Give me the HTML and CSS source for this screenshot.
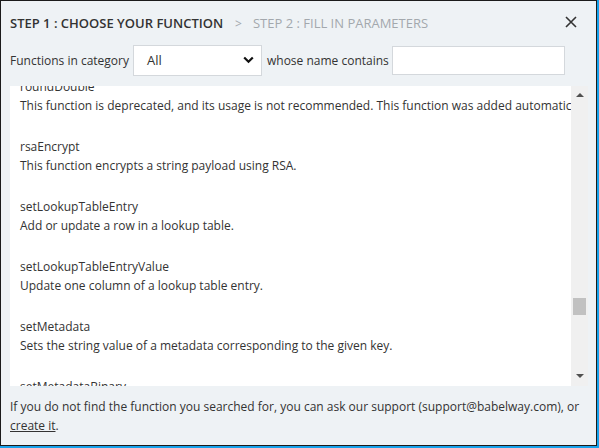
FILE: index.html
```html
<!DOCTYPE html>
<html>
<head>
<meta charset="utf-8">
<link rel="stylesheet" href="styles.css">
</head>
<body>
<div class="dialog">
  <div class="header">
    <span class="step active">STEP 1 : CHOOSE YOUR FUNCTION</span>
    <span class="sep">&gt;</span>
    <span class="step">STEP 2 : FILL IN PARAMETERS</span>
    <span class="close"><svg width="12" height="12" viewBox="0 0 12 12"><path d="M1 1 L11 11 M11 1 L1 11" stroke="#333" stroke-width="1.6" fill="none"/></svg></span>
  </div>
  <div class="filters">
    <span class="label">Functions in category</span>
    <div class="select"><span>All</span><svg width="11" height="8" viewBox="0 0 11 8"><path d="M1.2 1.5 L5.5 5.8 L9.8 1.5" stroke="#111" stroke-width="2.2" fill="none"/></svg></div>
    <span class="label">whose name contains</span>
    <div class="input"></div>
  </div>
  <div class="list">
    <div class="viewport">
      <div class="items">
        <div class="item"><div class="name">roundDouble</div><div class="desc">This function is deprecated, and its usage is not recommended. This function was added automatically for backward compatibility.</div></div>
        <div class="item"><div class="name">rsaEncrypt</div><div class="desc">This function encrypts a string payload using RSA.</div></div>
        <div class="item"><div class="name">setLookupTableEntry</div><div class="desc">Add or update a row in a lookup table.</div></div>
        <div class="item"><div class="name">setLookupTableEntryValue</div><div class="desc">Update one column of a lookup table entry.</div></div>
        <div class="item"><div class="name">setMetadata</div><div class="desc">Sets the string value of a metadata corresponding to the given key.</div></div>
        <div class="item"><div class="name">setMetadataBinary</div><div class="desc">Sets the binary value of a metadata corresponding to the given key.</div></div>
      </div>
    </div>
    <div class="scrollbar">
      <div class="arrow up"></div>
      <div class="track"><div class="thumb"></div></div>
      <div class="arrow down"></div>
    </div>
  </div>
  <div class="footer">If you do not find the function you searched for, you can ask our support (support@babelway.com), or <a href="#">create it</a>.</div>
</div>
</body>
</html>
```

FILE: styles.css
```css
html { background: #16a2ec; }
body {
  margin: 0;
  font-family: "Open Sans", "Noto Sans", sans-serif;
  font-size: 12px;
  color: #333;
}
.dialog {
  width: 597px;
  height: 446px;
  box-sizing: border-box;
  border: 1px solid #1b1b1b;
  background: #eef2f5;
  display: flex;
  flex-direction: column;
}
.header {
  display: flex;
  align-items: center;
  height: 42px;
  box-sizing: border-box;
  padding: 2px 9px 0;
  font-size: 13px;
}
.step { color: #a3a8ad; }
.step.active { color: #333; font-weight: 600; }
.sep { color: #a3a8ad; margin: 0 11px 0 12px; font-size: 12px; }
.close { margin-left: auto; margin-right: 10px; display: flex; margin-top: -2px; }
.filters {
  display: flex;
  align-items: center;
  height: 32px;
  padding: 0 9px;
  margin-top: 1px;
}
.label { white-space: nowrap; }
.select {
  width: 129px;
  height: 31px;
  box-sizing: border-box;
  border: 1px solid #d4d8dc;
  background: #fff;
  margin: 0 5px 0 4px;
  display: flex;
  align-items: center;
  justify-content: space-between;
  padding: 0 7px 0 13px;
  font-size: 13px;
}
.input {
  width: 173px;
  height: 29px;
  box-sizing: border-box;
  border: 1px solid #d4d8dc;
  background: #fff;
  margin-left: 3px;
}
.list {
  margin: 10px 8px 0 9px;
  height: 300px;
  display: flex;
}
.viewport {
  flex: 1;
  background: #fff;
  overflow: hidden;
}
.items { margin-top: -9px; padding-left: 10px; }
.item { margin-bottom: 21px; }
.name { line-height: 19px; white-space: nowrap; }
.desc { line-height: 20px; white-space: nowrap; }
.scrollbar {
  width: 17px;
  background: #f0f0f0;
  display: flex;
  flex-direction: column;
  align-items: center;
}
.arrow { width: 0; height: 0; border-left: 4px solid transparent; border-right: 4px solid transparent; }
.arrow.up { border-bottom: 4px solid #505050; margin-top: 7px; }
.arrow.down { border-top: 4px solid #505050; margin-bottom: 8px; }
.track { flex: 1; width: 100%; display: flex; flex-direction: column; align-items: center; }
.thumb { width: 13px; height: 17px; background: #c1c1c1; margin-top: 201px; }
.footer {
  padding: 11px 16px 0 9px;
  line-height: 19px;
}
.footer a { color: #333; }
```
